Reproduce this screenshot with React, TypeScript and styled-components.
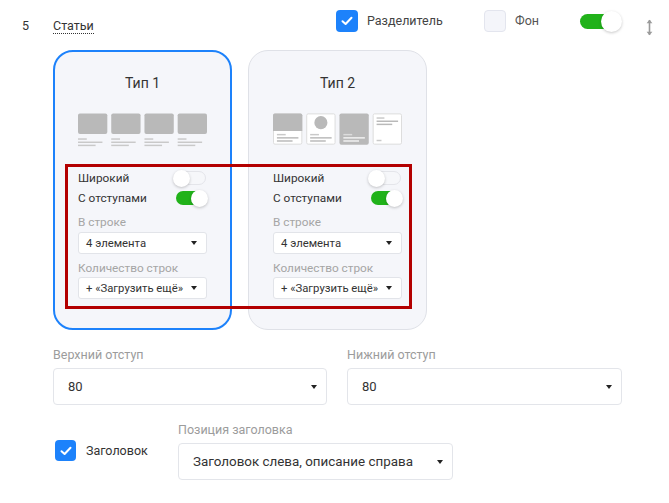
import React from "react";
import styled, { createGlobalStyle, css } from "styled-components";

const GlobalStyle = createGlobalStyle`
  html, body { margin: 0; padding: 0; background: #ffffff; }
  body { font-family: Roboto, "Noto Sans", "Liberation Sans", sans-serif; color: #333; }
  * { box-sizing: border-box; }
`;

const Page = styled.div`
  width: 669px;
  height: 503px;
  overflow: hidden;
  background: #fff;
`;

const Header = styled.div`
  display: flex;
  align-items: flex-start;
  height: 50px;
  padding: 0 16px 0 22px;
`;

const Num = styled.div`
  width: 31px;
  padding-top: 18px;
  font-size: 12.5px;
  line-height: 15px;
  color: #333;
`;

const SectionTitle = styled.span`
  margin-top: 18px;
  font-size: 12.5px;
  line-height: 15px;
  color: #333;
  border-bottom: 1px dotted #333;
`;

const RightGroup = styled.div`
  margin-left: auto;
  display: flex;
  align-items: flex-start;
  padding-top: 10px;
`;

const CheckItem = styled.div<{ $w: number }>`
  width: ${(p) => p.$w}px;
  display: flex;
  align-items: center;
  gap: 9px;
  height: 21px;
  font-size: 12.5px;
  color: #444;
`;

const Box = styled.div<{ $checked: boolean; $size: number }>`
  width: ${(p) => p.$size}px;
  height: ${(p) => p.$size}px;
  border-radius: 4px;
  flex: none;
  display: flex;
  align-items: center;
  justify-content: center;
  ${(p) =>
    p.$checked
      ? css`
          background: #1d82fb;
        `
      : css`
          background: #f4f5fa;
          border: 1px solid #e3e5ee;
        `}
`;

const Track = styled.div<{ $on: boolean; $w: number; $h: number; $k: number }>`
  position: relative;
  flex: none;
  width: ${(p) => p.$w}px;
  height: ${(p) => p.$h}px;
  border-radius: ${(p) => p.$h}px;
  background: ${(p) => (p.$on ? "#21b21a" : "#f6f7fa")};
  border: ${(p) => (p.$on ? "none" : "1px solid #e4e5ea")};
`;

const Knob = styled.div<{ $on: boolean; $w: number; $h: number; $k: number }>`
  position: absolute;
  top: ${(p) => (p.$h - p.$k) / 2 - (p.$on ? 0 : 1)}px;
  left: ${(p) => (p.$on ? p.$w - p.$k + 2 : -4)}px;
  width: ${(p) => p.$k}px;
  height: ${(p) => p.$k}px;
  border-radius: 50%;
  background: #fff;
  box-shadow: 0 1px 3px rgba(0, 0, 0, 0.22);
`;

const HeaderToggleWrap = styled.div`
  padding-top: 4px;
  width: 66px;
`;

const ArrowIcon = styled.svg`
  margin-top: 9px;
  display: block;
`;

const CardsRow = styled.div`
  position: relative;
  display: flex;
  gap: 16px;
  padding-left: 53px;
`;

const Card = styled.div<{ $active: boolean }>`
  width: 179px;
  height: 280px;
  border-radius: 20px;
  background: #f5f6fa;
  border: ${(p) => (p.$active ? "2px solid #1d82fb" : "1px solid #dfe1e7")};
  padding: ${(p) => (p.$active ? "21px 23px 0 23px" : "22px 24px 0 24px")};
  display: flex;
  flex-direction: column;
`;

const CardTitle = styled.div`
  font-size: 14px;
  line-height: 20px;
  text-align: center;
  color: #333;
  margin-bottom: 20px;
`;

const Thumbs = styled.div`
  height: 34px;
  display: flex;
  gap: 4px;
  margin-bottom: 21px;
`;

const ToggleRow = styled.div`
  display: flex;
  justify-content: space-between;
  align-items: center;
  height: 20px;
  font-size: 11.8px;
  color: #333;
  padding-right: 1px;
`;

const SmallLabel = styled.div<{ $mt: number }>`
  margin-top: ${(p) => p.$mt}px;
  font-size: 11.8px;
  line-height: 16px;
  color: #a5a5a5;
`;

const SmallSelect = styled.div<{ $mt: number }>`
  margin-top: ${(p) => p.$mt}px;
  height: 22px;
  background: #fff;
  border: 1px solid #e2e4e9;
  border-radius: 3px;
  display: flex;
  align-items: center;
  justify-content: space-between;
  padding: 0 9px 0 7px;
  font-size: 11.3px;
  color: #333;
  white-space: nowrap;
`;

const Caret = styled.span<{ $s: number }>`
  flex: none;
  width: 0;
  height: 0;
  border-left: ${(p) => p.$s}px solid transparent;
  border-right: ${(p) => p.$s}px solid transparent;
  border-top: ${(p) => p.$s + 1}px solid #222;
`;

const Highlight = styled.div`
  position: absolute;
  left: 65px;
  top: 114px;
  width: 347px;
  height: 145px;
  border: 3px solid #b30000;
  pointer-events: none;
`;

const FieldsGrid = styled.div`
  display: grid;
  grid-template-columns: 274px 275px;
  gap: 20px;
  padding-left: 53px;
  margin-top: 17px;
`;

const Field = styled.div`
  display: flex;
  flex-direction: column;
`;

const FieldLabel = styled.div`
  font-size: 12.5px;
  line-height: 16px;
  color: #9c9c9c;
`;

const BigSelect = styled.div<{ $fs: number }>`
  margin-top: 5px;
  height: 37px;
  background: #fff;
  border: 1px solid #e3e5ea;
  border-radius: 4px;
  display: flex;
  align-items: center;
  justify-content: space-between;
  padding: 0 9px 0 14px;
  font-size: ${(p) => p.$fs}px;
  color: #333;
  white-space: nowrap;
`;

const BottomRow = styled.div`
  display: flex;
  padding-left: 53px;
  margin-top: 17px;
`;

const BottomCheck = styled.div`
  width: 125px;
  padding: 18px 0 0 2px;
  display: flex;
  align-items: flex-start;
  gap: 10px;
  font-size: 12.5px;
  color: #333;
  line-height: 21px;
`;

const PositionField = styled.div`
  width: 275px;
  display: flex;
  flex-direction: column;
`;

const Check = () => (
  <svg width="12" height="10" viewBox="0 0 12 10">
    <path d="M1.5 5.2 L4.6 8 L10.5 1.8" fill="none" stroke="#fff" strokeWidth="2" strokeLinecap="round" strokeLinejoin="round" />
  </svg>
);

const Toggle = ({ on, w, h, k }: { on: boolean; w: number; h: number; k: number }) => (
  <Track $on={on} $w={w} $h={h} $k={k}>
    <Knob $on={on} $w={w} $h={h} $k={k} />
  </Track>
);

const GRAY = "#b9b9b9";
const LINE = "#c9c9c9";

const Type1Thumbs = () => (
  <svg width="132" height="34" viewBox="0 0 132 34">
    {[0, 34, 68, 102].map((x) => (
      <g key={x}>
        <rect x={x} y={0} width={30} height={21} rx={2} fill={GRAY} />
        <rect x={x} y={25.5} width={9} height={1.5} fill={LINE} />
        <rect x={x} y={28.8} width={25} height={1.5} fill={LINE} />
        <rect x={x} y={32} width={18} height={1.5} fill={LINE} />
      </g>
    ))}
  </svg>
);

const Type2Thumbs = () => (
  <svg width="132" height="34" viewBox="0 0 132 34">
    <g>
      <rect x={0.5} y={0.5} width={29} height={31} rx={1.5} fill="#fff" stroke="#dcdcdc" />
      <path d="M0 2 a2 2 0 0 1 2 -2 h26 a2 2 0 0 1 2 2 v16 h-30 z" fill={GRAY} />
      <rect x={4} y={21} width={9} height={1.5} fill={LINE} />
      <rect x={4} y={24.3} width={22} height={1.5} fill={GRAY} />
      <rect x={4} y={27.5} width={16} height={1.5} fill={GRAY} />
    </g>
    <g transform="translate(34 0)">
      <rect x={0.5} y={0.5} width={29} height={31} rx={1.5} fill="#fff" stroke="#dcdcdc" />
      <circle cx={15} cy={9.5} r={6.7} fill={GRAY} />
      <rect x={4} y={21} width={9} height={1.5} fill={LINE} />
      <rect x={4} y={24.3} width={22} height={1.5} fill={GRAY} />
      <rect x={4} y={27.5} width={16} height={1.5} fill={GRAY} />
    </g>
    <g transform="translate(68 0)">
      <rect x={0} y={0} width={30} height={32} rx={2} fill={GRAY} />
      <rect x={4} y={21} width={9} height={1.5} fill="#dcdcdc" />
      <rect x={4} y={24.3} width={22} height={1.5} fill="#f2f2f2" />
      <rect x={4} y={27.5} width={16} height={1.5} fill="#f2f2f2" />
    </g>
    <g transform="translate(102 0)">
      <rect x={0.5} y={0.5} width={29} height={31} rx={1.5} fill="#fff" stroke="#dcdcdc" />
      <rect x={4} y={4} width={8} height={1.5} fill={LINE} />
      <rect x={4} y={7.3} width={22} height={1.5} fill={GRAY} />
      <rect x={4} y={10.5} width={16} height={1.5} fill={GRAY} />
      <rect x={4} y={27} width={5} height={1.5} fill={LINE} />
    </g>
  </svg>
);

const CardBody = ({ title, thumbs, active }: { title: string; thumbs: React.ReactNode; active: boolean }) => (
  <Card $active={active}>
    <CardTitle>{title}</CardTitle>
    <Thumbs>{thumbs}</Thumbs>
    <ToggleRow>
      <span>Широкий</span>
      <Toggle on={false} w={30} h={14} k={17} />
    </ToggleRow>
    <ToggleRow>
      <span>С отступами</span>
      <Toggle on={true} w={30} h={14} k={17} />
    </ToggleRow>
    <SmallLabel $mt={6}>В строке</SmallLabel>
    <SmallSelect $mt={2}>
      <span>4 элемента</span>
      <Caret $s={3} />
    </SmallSelect>
    <SmallLabel $mt={6}>Количество строк</SmallLabel>
    <SmallSelect $mt={1}>
      <span>+ «Загрузить ещё»</span>
      <Caret $s={3} />
    </SmallSelect>
  </Card>
);

export default function App() {
  return (
    <Page>
      <GlobalStyle />
      <Header>
        <Num>5</Num>
        <SectionTitle>Статьи</SectionTitle>
        <RightGroup>
          <CheckItem $w={148}>
            <Box $checked $size={22}>
              <Check />
            </Box>
            <span>Разделитель</span>
          </CheckItem>
          <CheckItem $w={96}>
            <Box $checked={false} $size={22} />
            <span style={{ color: "#555" }}>Фон</span>
          </CheckItem>
          <HeaderToggleWrap>
            <Toggle on={true} w={40} h={15} k={21} />
          </HeaderToggleWrap>
          <ArrowIcon width="7" height="17" viewBox="0 0 7 17">
            <path d="M3.5 1 V16" stroke="#9a9a9a" strokeWidth="1.6" />
            <path d="M0.6 4.2 L3.5 0.8 L6.4 4.2 Z" fill="#9a9a9a" />
            <path d="M0.6 12.8 L3.5 16.2 L6.4 12.8 Z" fill="#9a9a9a" />
          </ArrowIcon>
        </RightGroup>
      </Header>

      <CardsRow>
        <CardBody title="Тип 1" thumbs={<Type1Thumbs />} active />
        <CardBody title="Тип 2" thumbs={<Type2Thumbs />} active={false} />
        <Highlight />
      </CardsRow>

      <FieldsGrid>
        <Field>
          <FieldLabel>Верхний отступ</FieldLabel>
          <BigSelect $fs={13}>
            <span>80</span>
            <Caret $s={3} />
          </BigSelect>
        </Field>
        <Field>
          <FieldLabel>Нижний отступ</FieldLabel>
          <BigSelect $fs={13}>
            <span>80</span>
            <Caret $s={3} />
          </BigSelect>
        </Field>
      </FieldsGrid>

      <BottomRow>
        <BottomCheck>
          <Box $checked $size={21}>
            <Check />
          </Box>
          <span>Заголовок</span>
        </BottomCheck>
        <PositionField>
          <FieldLabel>Позиция заголовка</FieldLabel>
          <BigSelect $fs={13.4}>
            <span>Заголовок слева, описание справа</span>
            <Caret $s={3} />
          </BigSelect>
        </PositionField>
      </BottomRow>
    </Page>
  );
}
